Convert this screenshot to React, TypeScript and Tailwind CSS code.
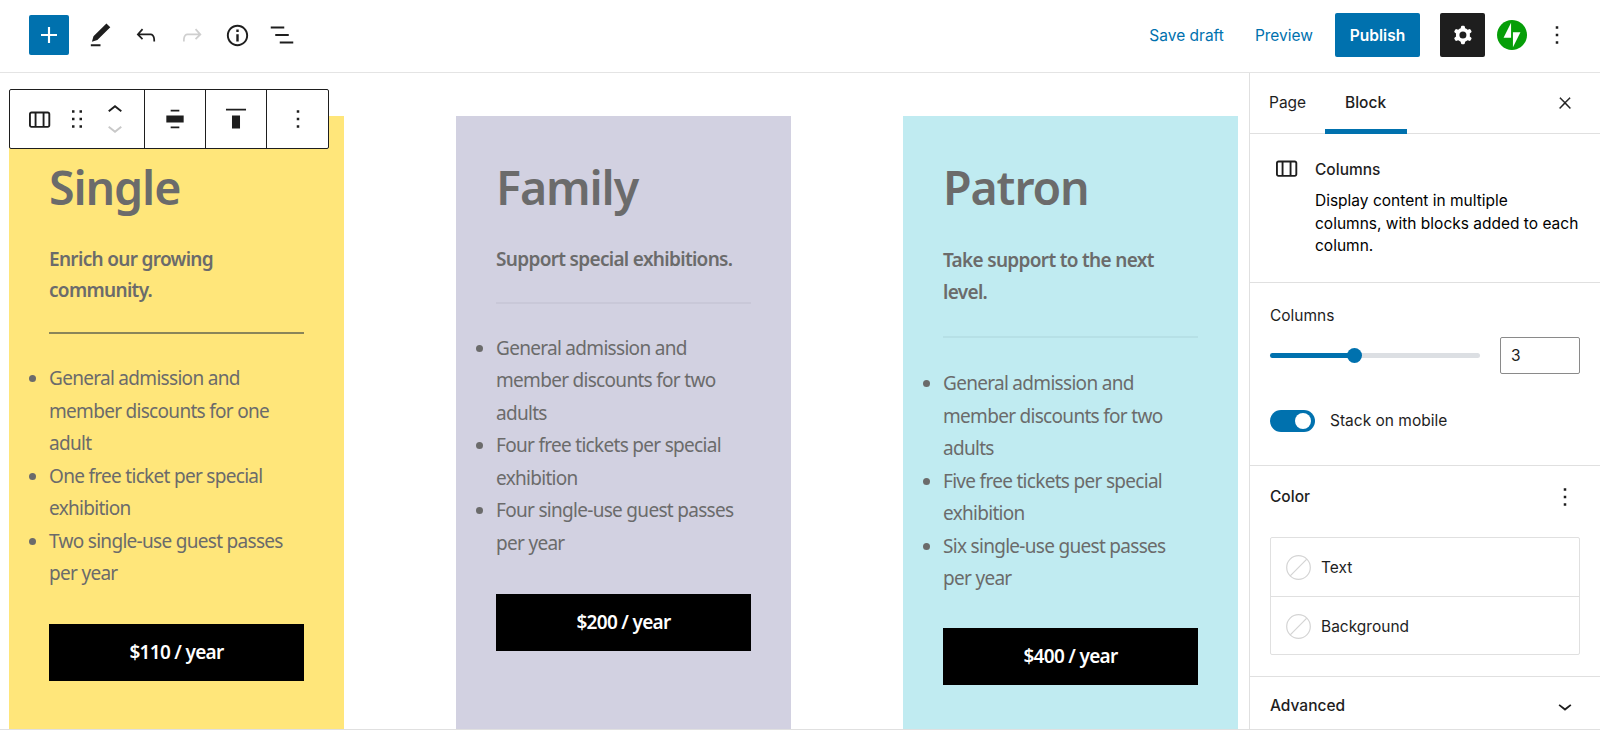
import React from "react";

const P = ({ d, size = 24, className = "", rule }: { d: string; size?: number; className?: string; rule?: boolean }) => (
  <svg width={size} height={size} viewBox="0 0 24 24" className={className} fill="currentColor">
    <path d={d} fillRule={rule ? "evenodd" : undefined} clipRule={rule ? "evenodd" : undefined} />
  </svg>
);

const icons = {
  plus: "M18 11.2h-5.2V6h-1.6v5.2H6v1.6h5.2V18h1.6v-5.2H18z",
  pencil: "M20.1 5.1L16.9 2 6.2 12.7l-1.3 4.4 4.5-1.3L20.1 5.1zM4 20.8h8v-1.5H4v1.5z",
  undo: "M18.3 11.7c-.6-.6-1.4-.9-2.3-.9H6.7l2.9-3.3-1.1-1-4.5 5L8.5 16l1-1-2.7-2.7H16c.5 0 .9.2 1.3.5 1 1 1 3.4 1 4.5v.3h1.5v-.2c0-1.5 0-4.3-1.5-5.7z",
  redo: "M15.6 6.5l-1.1 1 2.9 3.3H8c-.9 0-1.7.3-2.3.9-1.4 1.5-1.4 4.2-1.4 5.6v.2h1.5v-.3c0-1.1 0-3.5 1-4.5.3-.3.7-.5 1.3-.5h9.2L14.5 15l1.1 1.1 4.6-4.6-4.6-5z",
  info: "M12 3.2c-4.8 0-8.8 3.9-8.8 8.8 0 4.8 3.9 8.8 8.8 8.8 4.8 0 8.8-3.9 8.8-8.8 0-4.8-4-8.8-8.8-8.8zm0 16c-4 0-7.2-3.3-7.2-7.2C4.8 8 8 4.8 12 4.8s7.2 3.3 7.2 7.2c0 4-3.2 7.2-7.2 7.2zM11 17h2v-6h-2v6zm0-8h2V7h-2v2z",
  list: "M13.8 5.2H3v1.5h10.8V5.2zm-3.6 12v1.5H21v-1.5H10.2zm7.2-6H6.6v1.5h10.8v-1.5z",
  cog: "M10.289 4.836A1 1 0 0111.275 4h1.306a1 1 0 01.987.836l.244 1.466c.787.26 1.503.679 2.108 1.218l1.393-.522a1 1 0 011.216.437l.653 1.13a1 1 0 01-.23 1.273l-1.148.944a6.025 6.025 0 010 2.435l1.149.946a1 1 0 01.23 1.272l-.653 1.13a1 1 0 01-1.216.437l-1.394-.522c-.605.54-1.32.958-2.108 1.218l-.244 1.466a1 1 0 01-.987.836h-1.306a1 1 0 01-.986-.836l-.244-1.466a5.995 5.995 0 01-2.108-1.218l-1.394.522a1 1 0 01-1.217-.436l-.653-1.131a1 1 0 01.23-1.272l1.149-.946a6.026 6.026 0 010-2.435l-1.148-.944a1 1 0 01-.23-1.272l.653-1.131a1 1 0 011.217-.437l1.393.522a5.994 5.994 0 012.108-1.218l.244-1.466zM14.929 12a3 3 0 11-6 0 3 3 0 016 0z",
  more: "M13 19h-2v-2h2v2zm0-6h-2v-2h2v2zm0-6h-2V5h2v2z",
  columns: "M19 6H6c-1.1 0-2 .9-2 2v9c0 1.1.9 2 2 2h13c1.1 0 2-.9 2-2V8c0-1.1-.9-2-2-2zm-4.1 1.5v10H10v-10h4.9zM5.5 17V8c0-.3.2-.5.5-.5h2.5v10H6c-.3 0-.5-.2-.5-.5zm14 0c0 .3-.2.5-.5.5h-2.6v-10H19c.3 0 .5.2.5.5v9z",
  drag: "M8 7h2V5H8v2zm0 6h2v-2H8v2zm0 6h2v-2H8v2zm6-14v2h2V5h-2zm0 8h2v-2h-2v2zm0 6h2v-2h-2v2z",
  up: "M6.5 12.4L12 8l5.5 4.4-.9 1.2L12 10l-4.5 3.6-1-1.2z",
  down: "M17.5 11.6L12 16l-5.5-4.4.9-1.2L12 14l4.5-3.6 1 1.2z",
  close: "M13 11.8l6.1-6.3-1-1-6.1 6.2-6.1-6.2-1 1 6.1 6.3-6.5 6.7 1 1 6.5-6.6 6.5 6.6 1-1z",
  alignC: "M8 3.5h8V5H8zM4 8.8h16v6.4H4zM8 19h8v1.5H8z",
  alignT: "M2.75 2.6h18.5v1.5H2.75zM8.3 8.8h7.4v12H8.3z",
};

const columns = [
  {
    bg: "bg-[#ffe67a]",
    title: "Single",
    lead: ["Enrich our growing", "community."],
    rule: "bg-[#8a8559]",
    ruleGap: "mt-[27px]",
    listGap: "mt-[28px]",
    btnGap: "mt-[34px]",
    leadLh: "leading-[30.5px]",
    items: [
      ["General admission and", "member discounts for one", "adult"],
      ["One free ticket per special", "exhibition"],
      ["Two single-use guest passes", "per year"],
    ],
    price: "$110 / year",
  },
  {
    bg: "bg-[#d2d1e1]",
    title: "Family",
    lead: ["Support special exhibitions."],
    rule: "bg-[#c9c8d8]",
    ruleGap: "mt-[27px]",
    listGap: "mt-[28px]",
    btnGap: "mt-[35px]",
    leadLh: "leading-[30.5px]",
    items: [
      ["General admission and", "member discounts for two", "adults"],
      ["Four free tickets per special", "exhibition"],
      ["Four single-use guest passes", "per year"],
    ],
    price: "$200 / year",
  },
  {
    bg: "bg-[#c0ebf1]",
    title: "Patron",
    lead: ["Take support to the next", "level."],
    rule: "bg-[#b6e0e6]",
    ruleGap: "mt-[28px]",
    listGap: "mt-[29px]",
    btnGap: "mt-[33px]",
    leadLh: "leading-[32px]",
    items: [
      ["General admission and", "member discounts for two", "adults"],
      ["Five free tickets per special", "exhibition"],
      ["Six single-use guest passes", "per year"],
    ],
    price: "$400 / year",
  },
];

const source = "font-['Noto_Sans','Open_Sans',sans-serif]";

function Col({ c }: { c: (typeof columns)[number] }) {
  return (
    <div className={`${c.bg} w-[335px] h-full shrink-0 px-10 pt-[41px] text-[#6b6b6b] ${source}`}>
      <h2 className="text-[46.5px] leading-[60px] font-semibold tracking-[-1.1px]">{c.title}</h2>
      <p className={`mt-[27px] text-[19px] ${c.leadLh} font-semibold tracking-[-0.68px]`}>
        {c.lead.map((l) => (
          <span key={l} className="block whitespace-nowrap">{l}</span>
        ))}
      </p>
      <div className={`${c.ruleGap} h-[2px] ${c.rule}`} />
      <ul className={`${c.listGap} list-disc text-[19px] leading-[32.5px] tracking-[-0.7px]`}>
        {c.items.map((it) => (
          <li key={it[0]}>
            {it.map((l) => (
              <span key={l} className="block whitespace-nowrap">{l}</span>
            ))}
          </li>
        ))}
      </ul>
      <div className={`${c.btnGap} h-[57px] bg-black flex items-center justify-center text-white text-[19px] font-semibold tracking-[-0.7px]`}>
        {c.price}
      </div>
    </div>
  );
}

const Slash = () => (
  <svg width="25" height="25" viewBox="0 0 25 25" fill="none" stroke="#d4d4d4" strokeWidth="1.2">
    <circle cx="12.5" cy="12.5" r="11.8" />
    <path d="M4.2 20.8 20.8 4.2" />
  </svg>
);

export default function App() {
  return (
    <div className="w-[1600px] h-[734px] bg-white overflow-hidden flex flex-col font-['Inter',sans-serif] text-[#1e1e1e]">
      <header className="h-[73px] shrink-0 border-b border-[#e4e4e4] flex items-center justify-between pl-[29px] pr-[28px] pb-[2px]">
        <div className="flex items-center">
          <div className="w-10 h-10 rounded-[2px] bg-[#0071ae] text-white flex items-center justify-center">
            <P d={icons.plus} size={32} />
          </div>
          <div className="ml-[9px] flex items-center">
            <div className="w-[45.5px] flex justify-center"><P d={icons.pencil} size={29} /></div>
            <div className="w-[45.5px] flex justify-center"><P d={icons.undo} size={28} /></div>
            <div className="w-[45.5px] flex justify-center text-[#cfcfcf]"><P d={icons.redo} size={28} /></div>
            <div className="w-[45.5px] flex justify-center"><P d={icons.info} size={29} /></div>
            <div className="w-[45.5px] flex justify-center"><P d={icons.list} size={30} className="-ml-[2px]" /></div>
          </div>
        </div>
        <div className="flex items-center text-[15.5px]">
          <span className="pt-[2px] text-[#0071ae]">Save draft</span>
          <span className="ml-[31px] pt-[2px] text-[#0071ae]">Preview</span>
          <div className="ml-[22px] w-[85px] h-11 pt-[2px] rounded-[2px] bg-[#0071ae] text-white font-semibold flex items-center justify-center">Publish</div>
          <div className="ml-5 w-[45px] h-11 rounded-[2px] bg-[#1e1e1e] text-white flex items-center justify-center">
            <P d={icons.cog} size={28} rule />
          </div>
          <svg width="30" height="30" viewBox="0 0 32 32" className="ml-3">
            <path fill="#069e08" d="M16 0C7.2 0 0 7.2 0 16s7.2 16 16 16 16-7.2 16-16S24.8 0 16 0z" />
            <path fill="#fff" d="M15 19H7l8-16zM17 29V13h8z" />
          </svg>
          <P d={icons.more} size={30} className="ml-[15px]" />
        </div>
      </header>

      <div className="h-[657px] shrink-0 flex border-b border-[#e0e0e0]">
        <main className="relative flex-1 pl-[9px] pt-[43px] flex gap-[112px] overflow-hidden">
          {columns.map((c) => (
            <Col key={c.title} c={c} />
          ))}
          <div className="absolute left-[9px] top-[16px] w-[320px] h-[60px] bg-white border border-[#1e1e1e] rounded-[2px] flex items-stretch">
            <div className="w-[134.5px] border-r border-[#1e1e1e] flex items-center pl-[14px]">
              <P d={icons.columns} size={30} />
              <P d={icons.drag} size={30} className="ml-[8px]" />
              <div className="ml-[8px] flex flex-col items-center">
                <P d={icons.up} size={30} className="-mb-[12.5px]" />
                <P d={icons.down} size={30} className="text-[#c8c8c8]" />
              </div>
            </div>
            <div className="w-[61px] border-r border-[#1e1e1e] flex items-center justify-center"><P d={icons.alignC} size={26} /></div>
            <div className="w-[61.5px] border-r border-[#1e1e1e] flex items-center justify-center"><P d={icons.alignT} size={26} /></div>
            <div className="flex-1 flex items-center justify-center"><P d={icons.more} size={30} /></div>
          </div>
        </main>

        <aside className="w-[351px] shrink-0 border-l border-[#e0e0e0] text-[15.5px]">
          <div className="h-[61px] border-b border-[#e0e0e0] relative">
            <span className="absolute left-[19px] top-[18px]">Page</span>
            <span className="absolute left-[95px] top-[18px] font-medium">Block</span>
            <div className="absolute left-[75px] bottom-[-1px] w-[82px] h-[5px] bg-[#0071ae]" />
            <P d={icons.close} size={18} className="absolute left-[306px] top-[21px] stroke-current stroke-[0.6px]" />
          </div>

          <div className="h-[149px] border-b border-[#e0e0e0] flex pl-[21px] pt-[24px]">
            <P d={icons.columns} size={30} className="-mt-[5px]" />
            <div className="ml-[14px] w-[275px]">
              <div className="font-medium leading-[24px]">Columns</div>
              <p className="mt-[8px] text-[15.5px] leading-[22.5px] text-black">
                <span className="block whitespace-nowrap">Display content in multiple</span>
                <span className="block whitespace-nowrap">columns, with blocks added to each</span>
                <span className="block whitespace-nowrap">column.</span>
              </p>
            </div>
          </div>

          <div className="h-[183px] border-b border-[#e0e0e0] px-5 pt-[22px]">
            <div className="leading-[22px]">Columns</div>
            <div className="mt-[10px] flex items-center">
              <div className="relative w-[210px] h-[5px] rounded-full bg-[#dcdfe3]">
                <div className="absolute left-0 top-0 h-full w-[84px] rounded-full bg-[#0071ae]" />
                <div className="absolute left-[77px] top-[-5px] w-[15px] h-[15px] rounded-full bg-[#0071ae]" />
              </div>
              <div className="ml-5 w-[80px] h-[37px] border border-[#8a8a8a] rounded-[2px] flex items-center pl-[10px] text-[15.5px]">3</div>
            </div>
            <div className="mt-[35px] flex items-center">
              <div className="relative w-[45px] h-[22px] rounded-full bg-[#0071ae]">
                <div className="absolute right-[4px] top-[3px] w-4 h-4 rounded-full bg-white" />
              </div>
              <span className="ml-[15px]">Stack on mobile</span>
            </div>
          </div>

          <div className="h-[211px] border-b border-[#e0e0e0] px-5 pt-[19px]">
            <div className="flex items-center justify-between h-6">
              <span className="font-medium">Color</span>
              <P d={icons.more} size={30} />
            </div>
            <div className="mt-[28px] w-[310px] h-[118px] border border-[#e0e0e0] rounded-[2px]">
              <div className="h-[59px] border-b border-[#e0e0e0] flex items-center pl-[15px]">
                <Slash />
                <span className="ml-[10px] mt-[2px]">Text</span>
              </div>
              <div className="h-[58px] flex items-center pl-[15px]">
                <Slash />
                <span className="ml-[10px] mt-[2px]">Background</span>
              </div>
            </div>
          </div>

          <div className="h-[52px] pl-5 pr-[21px] pt-[6px] flex items-center justify-between">
            <span className="font-medium">Advanced</span>
            <P d={icons.down} size={28} />
          </div>
        </aside>
      </div>
    </div>
  );
}
